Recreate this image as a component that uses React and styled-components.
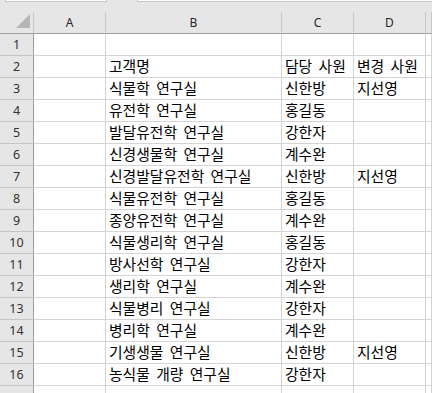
import styled, { createGlobalStyle } from "styled-components";

const rows = [
  ["", "", ""],
  ["고객명", "담당 사원", "변경 사원"],
  ["식물학 연구실", "신한방", "지선영"],
  ["유전학 연구실", "홍길동", ""],
  ["발달유전학 연구실", "강한자", ""],
  ["신경생물학 연구실", "계수완", ""],
  ["신경발달유전학 연구실", "신한방", "지선영"],
  ["식물유전학 연구실", "홍길동", ""],
  ["종양유전학 연구실", "계수완", ""],
  ["식물생리학 연구실", "홍길동", ""],
  ["방사선학 연구실", "강한자", ""],
  ["생리학 연구실", "계수완", ""],
  ["식물병리 연구실", "강한자", ""],
  ["병리학 연구실", "계수완", ""],
  ["기생생물 연구실", "신한방", "지선영"],
  ["농식물 개량 연구실", "강한자", ""],
];

function App() {
  return (
    <Sheet>
      <GlobalStyle />
      <Toolbar>
        <NameBox />
        <FormulaBox />
      </Toolbar>
      <Grid>
        <Corner>
          <svg width="15" height="15" viewBox="0 0 15 15">
            <polygon points="14,0 14,14 0,14" fill="#b6b6b6" />
          </svg>
        </Corner>
        {["A", "B", "C", "D", ""].map((c, i) => (
          <ColHead key={i}>{c}</ColHead>
        ))}
        {rows.map((r, i) => [
          <RowHead key={"h" + i}>{i + 1}</RowHead>,
          <Cell key={"a" + i} />,
          <Cell key={"b" + i}>{r[0]}</Cell>,
          <Cell key={"c" + i}>{r[1]}</Cell>,
          <Cell key={"d" + i}>{r[2]}</Cell>,
          <Cell key={"e" + i} />,
        ])}
        <RowHead $last />
        <Cell $last />
        <Cell $last />
        <Cell $last />
        <Cell $last />
        <Cell $last>
          <Grip />
        </Cell>
      </Grid>
    </Sheet>
  );
}

const GlobalStyle = createGlobalStyle`
  html, body {
    margin: 0;
    padding: 0;
    background: #ffffff;
    overflow: hidden;
  }
`;

const Sheet = styled.div`
  width: 432px;
  height: 393px;
  overflow: hidden;
  background: #ffffff;
`;

const Toolbar = styled.div`
  display: flex;
  height: 12px;
  background: #e6e6e6;
`;

const NameBox = styled.div`
  box-sizing: border-box;
  margin-left: 5px;
  width: 102px;
  height: 2px;
  background: #ffffff;
  border: 1px solid #c6c6c6;
  border-top: none;
`;

const FormulaBox = styled(NameBox)`
  margin-left: 30px;
  width: auto;
  flex: 1;
  margin-right: -2px;
`;

const Grid = styled.div`
  display: grid;
  grid-template-columns: 34px 72px 176px 72px 72px 1fr;
  grid-auto-rows: 22px;
`;

const Corner = styled.div`
  box-sizing: border-box;
  background: #e6e6e6;
  border-right: 1px solid #c8c8c8;
  border-bottom: 1px solid #9e9e9e;
  display: flex;
  align-items: flex-end;
  justify-content: flex-end;
  padding: 0 2px 4px 0;
`;

const ColHead = styled.div`
  box-sizing: border-box;
  background: #e6e6e6;
  border-right: 1px solid #c8c8c8;
  border-bottom: 1px solid #9e9e9e;
  display: flex;
  align-items: center;
  justify-content: center;
  font-family: "Noto Sans", "Liberation Sans", sans-serif;
  font-size: 12px;
  color: #262626;
`;

const RowHead = styled.div`
  box-sizing: border-box;
  background: #e6e6e6;
  border-right: 1px solid #9e9e9e;
  border-bottom: ${(p) => (p.$last ? "none" : "1px solid #c4c4c4")};
  display: flex;
  align-items: center;
  justify-content: center;
  font-family: "Noto Sans", "Liberation Sans", sans-serif;
  font-size: 12.5px;
  color: #333333;
`;

const Cell = styled.div`
  box-sizing: border-box;
  position: relative;
  border-right: 1px solid #d4d4d4;
  border-bottom: ${(p) => (p.$last ? "none" : "1px solid #d4d4d4")};
  display: flex;
  align-items: flex-end;
  padding: 0 0 1px 3px;
  white-space: nowrap;
  overflow: visible;
  font-family: "Noto Sans CJK KR", "Noto Sans", sans-serif;
  font-size: 14.8px;
  word-spacing: 3px;
  line-height: 20px;
  color: #000000;
`;

const Grip = styled.div`
  position: absolute;
  right: 2px;
  bottom: 2px;
  width: 4px;
  height: 4px;
  border: 1px solid #a0a0a0;
  background: #f0f0f0;
`;

export default App;
